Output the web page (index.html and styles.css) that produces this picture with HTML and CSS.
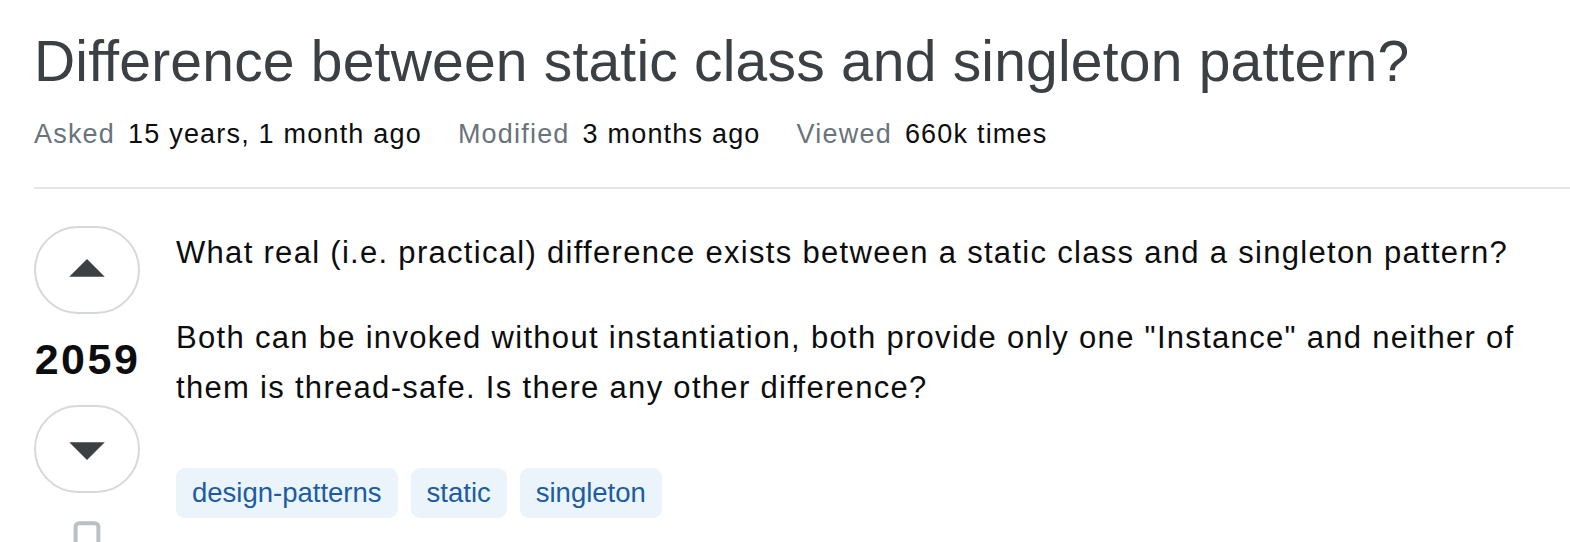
FILE: index.html
```html
<!DOCTYPE html>
<html lang="en">
<head>
<meta charset="utf-8">
<title>Difference between static class and singleton pattern?</title>
<link rel="stylesheet" href="styles.css">
</head>
<body>
<div class="page">
  <header class="q-header">
    <h1 class="q-title">Difference between static class and singleton pattern?</h1>
    <div class="q-meta">
      <div class="meta-item"><span class="meta-label">Asked</span><span class="meta-value">15 years, 1 month ago</span></div>
      <div class="meta-item"><span class="meta-label">Modified</span><span class="meta-value">3 months ago</span></div>
      <div class="meta-item"><span class="meta-label">Viewed</span><span class="meta-value">660k times</span></div>
    </div>
  </header>
  <div class="post">
    <div class="votes">
      <button class="vote-btn" aria-label="Up vote">
        <svg class="arrow" viewBox="0 0 18 18" width="40" height="40"><path d="M1 12h16L9 4z"/></svg>
      </button>
      <div class="vote-count">2059</div>
      <button class="vote-btn" aria-label="Down vote">
        <svg class="arrow" viewBox="0 0 18 18" width="40" height="40"><path d="M1 6h16l-8 8z"/></svg>
      </button>
      <svg class="bookmark" viewBox="0 0 18 18" width="36" height="36"><path d="M3.3 16.4V3.4c0-1 .8-1.8 1.8-1.8h7.8c1 0 1.8.8 1.8 1.8v13L9 12.8z"/></svg>
    </div>
    <div class="post-body">
      <p>What real (i.e. practical) difference exists between a static class and a singleton pattern?</p>
      <p>Both can be invoked without instantiation, both provide only one "Instance" and neither of them is thread-safe. Is there any other difference?</p>
      <ul class="tags">
        <li class="tag">design-patterns</li>
        <li class="tag">static</li>
        <li class="tag">singleton</li>
      </ul>
    </div>
  </div>
</div>
</body>
</html>
```
FILE: styles.css
```css
html, body {
  margin: 0;
  padding: 0;
  background: #ffffff;
  overflow: hidden;
}

body {
  font-family: "Liberation Sans", Arial, sans-serif;
  color: #0c0d0e;
}

.page {
  padding-left: 34px;
}

.q-header {
  padding-bottom: 35px;
  border-bottom: 2px solid #e3e6e8;
}

.q-title {
  margin: 24px 0 0;
  font-size: 57px;
  line-height: 74px;
  font-weight: 400;
  letter-spacing: 0.2px;
  color: #3b4045;
  white-space: nowrap;
}

.q-meta {
  display: flex;
  gap: 36px;
  margin-top: 18px;
  font-size: 27px;
  line-height: 36px;
  letter-spacing: 1.2px;
}

.meta-item {
  display: flex;
  gap: 13px;
}

.meta-label {
  color: #6a737c;
}

.meta-value {
  color: #0c0d0e;
}

.post {
  display: flex;
  padding-top: 37px;
}

.votes {
  width: 106px;
  flex: none;
  display: flex;
  flex-direction: column;
  align-items: center;
}

.vote-btn {
  width: 106px;
  height: 88px;
  box-sizing: border-box;
  border: 2px solid #d6d9dc;
  border-radius: 1000px;
  background: #ffffff;
  padding: 0;
  display: flex;
  align-items: center;
  justify-content: center;
}

.arrow {
  fill: #3b4045;
  display: block;
}

.vote-count {
  font-size: 43px;
  line-height: 91px;
  font-weight: 700;
  letter-spacing: 2.5px;
  text-indent: 1px;
  color: #0c0d0e;
}

.bookmark {
  display: block;
  margin-top: 27px;
  fill: none;
  stroke: #bbc0c4;
  stroke-width: 2;
  stroke-linejoin: round;
}

.post-body {
  flex: 1;
  min-width: 0;
  margin-left: 36px;
  padding-top: 2px;
  padding-right: 20px;
  font-size: 31px;
  line-height: 50px;
  letter-spacing: 1.3px;
}

.post-body p {
  margin: 0 0 35px;
}

.tags {
  list-style: none;
  margin: 55px 0 0;
  padding: 0;
  display: flex;
  gap: 13px;
}

.tag {
  height: 50px;
  line-height: 50px;
  padding: 0 16px;
  border-radius: 9px;
  background: #ebf4fb;
  color: #1c5ca3;
  font-size: 27.5px;
  letter-spacing: 0;
}
```
